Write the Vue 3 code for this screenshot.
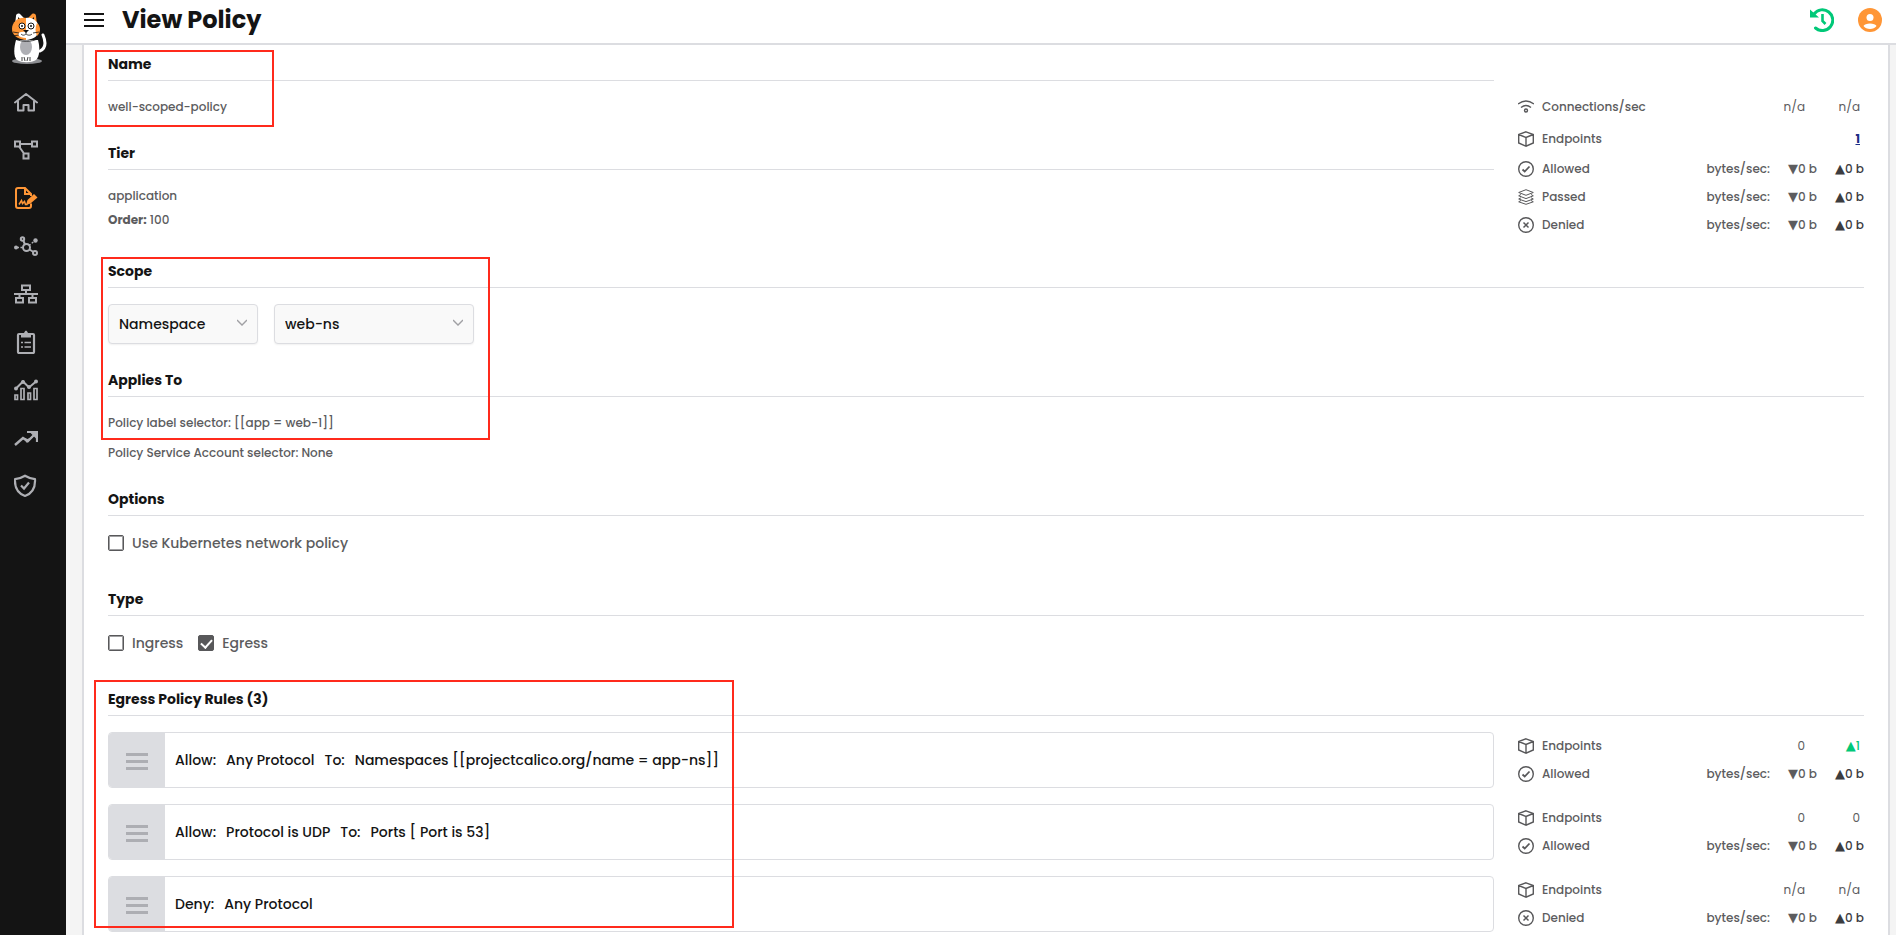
<template>
  <div class="layout">
    <aside class="sidebar">
      <a href="#" class="logo" aria-label="Home page">
        <svg width="36" height="54" viewBox="0 0 36 54">
          <ellipse cx="15" cy="48" rx="15" ry="3" fill="#8d8e92" />
          <path d="M28 38c6-3 6-9 3-16" fill="none" stroke="#fff" stroke-width="3" stroke-linecap="round" />
          <path d="M4 27h22c2 7 2 16-2 20-5 3-14 3-19 0-4-4-3-13-1-20z" fill="#fff" />
          <ellipse cx="14" cy="34" rx="6" ry="8" fill="#aeafb4" />
          <path d="M10 44v4M18 44v4M12 44l1 4M16 44l-1 4" stroke="#141414" stroke-width=".8" />
          <path d="M3 12 4 3c0-2 2-3 4-2l6 6z" fill="#fff" />
          <path d="M25 12 24 3c0-2-2-3-4-2l-6 6z" fill="#ff9636" />
          <path d="M6 9V4l4 4zM22 9V4l-4 4z" fill="#141414" />
          <path d="M14 5C6 4 0 9 0 16c0 6 5 10 14 11z" fill="#ff9636" />
          <path d="M14 5c7-1 13 4 13 11 0 6-4 10-13 11z" fill="#fff" />
          <path d="M25 10c4 3 4 9 0 13-2-4-2-9 0-13z" fill="#ff9636" />
          <circle cx="10" cy="13" r="3" fill="#fff" stroke="#141414" />
          <circle cx="19" cy="13" r="3" fill="#fff" stroke="#141414" />
          <circle cx="10" cy="13" r="1" fill="#141414" />
          <circle cx="19" cy="13" r="1" fill="#141414" />
          <path d="M6 22c0-3 4-4 8-3 4-1 8 0 8 3-3 4-13 4-16 0z" fill="#fff" />
          <path d="M11 17h6l-3 3z" fill="#141414" />
          <path d="M14 19v2M9 21c2 2 4 1 5 0 1 1 4 2 6 0M1 19l6 1M1 23l6-1M21 20l6-1M3 26c6 3 17 3 22 0" fill="none" stroke="#141414" stroke-width=".8" />
        </svg>
      </a>
      <nav class="nav">
        <a
          v-for="item in navItems"
          :key="item.label"
          href="#"
          class="nav-item"
          :class="{ active: item.active }"
          :aria-label="item.label"
        >
          <svg width="24" height="24" viewBox="0 0 24 24" fill="none" stroke="currentColor" stroke-width="2" v-html="item.icon"></svg>
        </a>
      </nav>
    </aside>

    <div class="main">
      <header class="topbar">
        <button class="icon-button menu" aria-label="Toggle menu">
          <svg width="20" height="14" viewBox="0 0 20 14" stroke="#141414" stroke-width="2">
            <path d="M0 1h20M0 7h20M0 13h20" />
          </svg>
        </button>
        <h1>View Policy</h1>
        <button class="icon-button" aria-label="History">
          <svg width="24" height="24" viewBox="0 0 24 24" fill="none" stroke="#00c878" stroke-width="3">
            <path d="M4 6A10.400 10.400 0 1 1 5.500 20" stroke-linecap="round" />
            <path d="M0 1.500v8h9z" fill="#00c878" stroke="none" />
            <path d="M12.500 6v7l3 3" stroke-width="2.600" />
          </svg>
        </button>
        <button class="icon-button" aria-label="Account">
          <svg width="24" height="24" viewBox="0 0 24 24">
            <circle cx="12" cy="12" r="12" fill="#ff9636" />
            <circle cx="12" cy="9.500" r="3.500" fill="#fff" />
            <path d="M5.500 18c1-3.500 12-3.500 13 0-2.500 4-10.500 4-13 0z" fill="#fff" />
          </svg>
        </button>
      </header>

      <main class="card">
        <div class="split">
          <div>
            <section class="section marked">
              <h2>Name</h2>
              <p>well-scoped-policy</p>
              <div class="marker marker-name"></div>
            </section>
            <section class="section tier">
              <h2>Tier</h2>
              <p>application</p>
              <p><b>Order:</b> 100</p>
            </section>
          </div>
          <table class="stats summary">
            <tbody>
              <tr v-for="row in summary" :key="row.label" :class="{ tall: !row.bytes }">
                <th scope="row">
                  <span class="stat-label">
                    <svg width="16" height="16" viewBox="0 0 16 16" v-html="statIcons[row.icon]"></svg>
                    {{ row.label }}
                  </span>
                </th>
                <template v-if="row.bytes">
                  <td>bytes/sec:</td>
                  <td><i>▼</i>0 b</td>
                  <td class="up"><i>▲</i>0 b</td>
                </template>
                <template v-else>
                  <td></td>
                  <td class="down-count">{{ row.down }}</td>
                  <td class="up-count">
                    <a v-if="row.link" href="#">{{ row.up }}</a>
                    <template v-else>{{ row.up }}</template>
                  </td>
                </template>
              </tr>
            </tbody>
          </table>
        </div>

        <div class="marked">
          <section class="section">
            <h2>Scope</h2>
            <div class="selects">
              <div class="select kind">
                <select v-model="scopeKind" aria-label="Scope">
                  <option>Namespace</option>
                  <option>Global</option>
                </select>
                <svg width="10" height="7" viewBox="0 0 10 7"><path d="M0 1 5 6l5-5" /></svg>
              </div>
              <div class="select value">
                <select v-model="namespace" aria-label="Namespace">
                  <option>web-ns</option>
                  <option>app-ns</option>
                </select>
                <svg width="10" height="7" viewBox="0 0 10 7"><path d="M0 1 5 6l5-5" /></svg>
              </div>
            </div>
          </section>
          <section class="section applies">
            <h2>Applies To</h2>
            <p>Policy label selector: [[app = web-1]]</p>
            <p>Policy Service Account selector: None</p>
          </section>
          <div class="marker marker-scope"></div>
        </div>

        <section class="section">
          <h2>Options</h2>
          <div class="checks">
            <label><input v-model="useK8s" type="checkbox" />Use Kubernetes network policy</label>
          </div>
        </section>

        <section class="section">
          <h2>Type</h2>
          <div class="checks">
            <label><input v-model="ingress" type="checkbox" />Ingress</label>
            <label><input v-model="egress" type="checkbox" />Egress</label>
          </div>
        </section>

        <section class="section marked">
          <h2>Egress Policy Rules ({{ rules.length }})</h2>
          <div class="rules">
            <div v-for="(rule, index) in rules" :key="index" class="split">
              <div class="rule">
                <button class="handle" aria-label="Reorder rule">
                  <svg width="22" height="17" viewBox="0 0 22 17" fill="#adaeb3">
                    <path d="M0 0h22v3H0zM0 7h22v3H0zM0 14h22v3H0z" />
                  </svg>
                </button>
                <div class="rule-text">
                  <span v-for="part in rule.parts" :key="part">{{ part }}</span>
                </div>
              </div>
              <table class="stats">
                <tbody>
                  <tr>
                    <th scope="row">
                      <span class="stat-label">
                        <svg width="16" height="16" viewBox="0 0 16 16" v-html="statIcons.box"></svg>
                        Endpoints
                      </span>
                    </th>
                    <td></td>
                    <td class="down-count">{{ rule.down }}</td>
                    <td class="up-count" :class="{ green: rule.active }"><i v-if="rule.active">▲</i>{{ rule.up }}</td>
                  </tr>
                  <tr>
                    <th scope="row">
                      <span class="stat-label">
                        <svg width="16" height="16" viewBox="0 0 16 16" v-html="statIcons[rule.icon]"></svg>
                        {{ rule.action }}
                      </span>
                    </th>
                    <td>bytes/sec:</td>
                    <td><i>▼</i>0 b</td>
                    <td class="up"><i>▲</i>0 b</td>
                  </tr>
                </tbody>
              </table>
            </div>
          </div>
          <div class="marker marker-rules"></div>
        </section>
      </main>
    </div>
  </div>
</template>

<script setup>
import { ref } from 'vue';

const scopeKind = ref('Namespace');
const namespace = ref('web-ns');
const useK8s = ref(false);
const ingress = ref(false);
const egress = ref(true);

// sidebar icons, 24x24
const navItems = [
  {
    label: 'Dashboard',
    icon: '<path d="M1 12.500 12 4l11 8.500M4 11v9.500h5.500V15h5v5.500H20V11" stroke-linejoin="round" stroke-linecap="round"/>'
  },
  {
    label: 'Service graph',
    icon: '<path d="M1 3.500h5v5H1zM18 3.500h5v5h-5zM9.500 15.500h5v5h-5zM6 6h12M5 8.500l5 7"/>'
  },
  {
    label: 'Policies',
    active: true,
    icon: '<path d="M17 17.500V20q0 2-2 2H4q-2 0-2-2V4q0-2 2-2h7l6 6v2M11 2v6h6"/><path d="m5 18.500 2.500-4 1 3 2-2 1 3h2" stroke-width="1.500"/><path d="m12 19 1.500-5L20 8l3.500 3.500-7 6z" fill="currentColor" stroke="none"/>'
  },
  {
    label: 'Endpoints',
    icon: '<circle cx="12.500" cy="13.500" r="3.500"/><circle cx="8.500" cy="5" r="1.700"/><circle cx="21" cy="19" r="2"/><path d="m9.500 7 1.500 3.500M15.500 15.500l4 2.500"/><path d="M3 13.500h6M15 11.500l5-4" stroke-width="1.400" stroke-dasharray="2 1.500"/><circle cx="2" cy="13.500" r="2" fill="currentColor" stroke="none"/><circle cx="21.500" cy="6.500" r="2.200" fill="currentColor" stroke="none"/>'
  },
  {
    label: 'Networks',
    icon: '<path d="M8 3.500h8v4.500H8zM2 16h7v4.500H2zM15 16h7v4.500h-7zM12 8v4M0 12h24M5.500 12v4M18.500 12v4"/>'
  },
  {
    label: 'Compliance',
    icon: '<rect x="4" y="4" width="16" height="19" rx="1" stroke-width="2.200"/><path d="M7 3h3q2-5 4 0h3v4.500H7z" fill="currentColor" stroke="none"/><path d="M7 12.500h2M10.500 12.500H17M7 17h2M10.500 17H17" stroke-width="1.700"/>'
  },
  {
    label: 'Activity',
    icon: '<path d="m2 10.500 7-7 6 6 7-6"/><g fill="currentColor" stroke="none"><circle cx="2" cy="10.500" r="2"/><circle cx="9" cy="4" r="2"/><circle cx="15" cy="9" r="2"/><circle cx="22" cy="3.500" r="2"/></g><path d="M1 17h2.500v4.500H1zM7 10.500h3v11H7zM14 15h2.500v6.500H14zM20 10.500h3v11h-3z" stroke-width="1.700"/>'
  },
  {
    label: 'Logs',
    icon: '<path d="m1 19 8-7 5 3 7-7" stroke-width="2.400"/><path d="m8 11.500 5 5.500L20 10l-6.500 3z" fill="currentColor" stroke="none"/><path d="M13 6h10v10" stroke-width="2.200"/><path d="m17 6 6 0v6z" fill="currentColor"/>'
  },
  {
    label: 'Threat defense',
    icon: '<path d="M11 1.700q5 3 10 3.500C21.500 13.500 19 19 11 22 3 19 .500 13.500 1 5.200 6 4.700 11 1.700 11 1.700z" stroke-linejoin="round" stroke-width="2.200"/><path d="m7 11.500 3 3 5-6" stroke-width="2.200"/>'
  }
];

// stats icons, 16x16
const statIcons = {
  wifi: '<path d="M0 5q8-6 16 0M3 8.500q5-4 10 0"/><circle cx="8" cy="11.500" r="1.500"/>',
  box: '<path d="m8 .800 7.300 2.700v8.500L8 15.200.700 12V3.500zM.700 3.500 8 6.500l7.300-3M8 6.500V15"/>',
  check: '<circle cx="8" cy="8" r="7.300"/><path d="m4.500 8.500 2.200 2 4.800-5" stroke-width="1.800"/>',
  layers: '<path d="m8 .7 7.300 2.800L8 6.300.700 3.500zM3 5.500.700 6.800 8 9.600l7.300-2.800L13 5.500M3 8.800.700 10 8 12.600l7.300-2.600L13 8.800M3 11.500.700 12.800 8 15.300l7.300-2.500-2.300-1.300" stroke-width="1"/>',
  cross: '<circle cx="8" cy="8" r="7.300"/><path d="m5.500 5.500 5 5M10.500 5.500l-5 5" stroke-width="1.500"/>'
};

const summary = [
  { label: 'Connections/sec', icon: 'wifi', down: 'n/a', up: 'n/a' },
  { label: 'Endpoints', icon: 'box', down: '', up: '1', link: true },
  { label: 'Allowed', icon: 'check', bytes: true },
  { label: 'Passed', icon: 'layers', bytes: true },
  { label: 'Denied', icon: 'cross', bytes: true }
];

const rules = ref([
  {
    parts: ['Allow:', 'Any Protocol', 'To:', 'Namespaces [[projectcalico.org/name = app-ns]]'],
    down: '0',
    up: '1',
    active: true,
    action: 'Allowed',
    icon: 'check'
  },
  {
    parts: ['Allow:', 'Protocol is UDP', 'To:', 'Ports [ Port is 53]'],
    down: '0',
    up: '0',
    action: 'Allowed',
    icon: 'check'
  },
  {
    parts: ['Deny:', 'Any Protocol'],
    down: 'n/a',
    up: 'n/a',
    action: 'Denied',
    icon: 'cross'
  }
]);
</script>

<style>
body {
  margin: 0;
  background: #f4f4f4;
}
</style>

<style scoped>
.layout {
  display: flex;
  min-height: 100vh;
  font-family: Poppins, Inter, "Liberation Sans", sans-serif;
  font-size: 12px;
  font-weight: 500;
  line-height: 20px;
  color: #5c5c5e;
}

.layout * {
  box-sizing: border-box;
}

.sidebar {
  flex: none;
  width: 66px;
  background: #141414;
}

.logo {
  display: block;
  height: 78px;
  padding: 13px 0 0 12px;
}

.nav-item {
  display: flex;
  align-items: center;
  height: 48px;
  padding-left: 14px;
  color: #aeafb4;
}

.nav-item.active {
  color: #ff9636;
}

.main {
  flex: 1;
  min-width: 0;
  display: flex;
  flex-direction: column;
}

.topbar {
  display: flex;
  align-items: center;
  gap: 24px;
  height: 45px;
  padding: 0 14px 4px 18px;
  background: #fff;
  border-bottom: 2px solid #dcdde1;
}

.icon-button {
  display: flex;
  padding: 0;
  border: 0;
  background: none;
  cursor: pointer;
}

.menu {
  margin-right: -6px;
}

h1 {
  flex: 1;
  margin: 0;
  font-size: 24px;
  font-weight: 700;
  line-height: 36px;
  color: #141414;
}

.card {
  flex: 1;
  margin: 0 6px 0 16px;
  padding: 9px 24px 0;
  background: #fff;
  border: solid #dcdde1;
  border-width: 0 2px;
}

.split {
  display: grid;
  grid-template-columns: 1fr 346px;
  gap: 24px;
}

.marked {
  position: relative;
}

.marker {
  position: absolute;
  border: 2px solid #ff2a1c;
  pointer-events: none;
}

.marker-name {
  top: -4px;
  left: -13px;
  width: 179px;
  height: 77px;
}

.marker-scope {
  top: -4px;
  left: -7px;
  width: 389px;
  height: 183px;
}

.marker-rules {
  top: -9px;
  left: -14px;
  width: 640px;
  height: 248px;
}

.section {
  margin-bottom: 26px;
}

.section.tier {
  margin-bottom: 31px;
}

h2 {
  margin: 0 0 16px;
  padding-bottom: 6px;
  border-bottom: 1px solid #dcdde1;
  font-size: 14px;
  font-weight: 700;
  line-height: 20px;
  color: #141414;
}

p {
  margin: 0;
}

p + p {
  margin-top: 4px;
}

.applies p + p {
  margin-top: 10px;
}

.stats {
  width: 100%;
  table-layout: fixed;
  border-collapse: collapse;
  align-self: start;
}

.summary {
  margin-top: 37px;
}

.stats tr {
  height: 28px;
}

.stats tr.tall {
  height: 32px;
}

.stats th,
.stats td {
  padding: 0;
  text-align: right;
  font-weight: 500;
  white-space: nowrap;
}

.stats th {
  width: 152px;
}

.stats td:nth-child(3),
.stats td:nth-child(4) {
  width: 47px;
}

.stats .down-count {
  padding-right: 12px;
}

.stats .up-count {
  padding-right: 4px;
}

.stats .down-count,
.stats .up-count {
  font-weight: 400;
}

.stats .up {
  color: #3c3c3f;
}

.stats .green {
  color: #00c878;
  font-weight: 500;
}

.stats i {
  font-family: "DejaVu Sans", sans-serif;
  font-size: 13px;
  font-style: normal;
  line-height: 1;
}

.stats a {
  color: #1d2f86;
  font-weight: 700;
}

.stat-label {
  display: flex;
  align-items: center;
  gap: 8px;
}

.stat-label svg {
  fill: none;
  stroke: #58585a;
  stroke-width: 1.4;
}

.selects {
  display: flex;
  gap: 16px;
}

.select {
  position: relative;
}

.kind {
  width: 150px;
}

.value {
  width: 200px;
}

.select select {
  display: block;
  width: 100%;
  height: 40px;
  padding: 0 32px 0 10px;
  appearance: none;
  border: 1px solid #dcdde1;
  border-radius: 4px;
  background: #f9f9f9;
  box-shadow: 0 1px 2px rgba(0, 0, 0, 0.06);
  font: inherit;
  font-size: 14px;
  color: #141414;
}

.select svg {
  position: absolute;
  top: 15px;
  right: 11px;
  fill: none;
  stroke: #a0a0a4;
  stroke-width: 1.4;
  pointer-events: none;
}

.checks {
  display: flex;
  gap: 15px;
  height: 31px;
  font-size: 14px;
}

.checks label {
  display: flex;
  align-items: center;
  gap: 8px;
  height: 22px;
}

.checks input {
  position: relative;
  width: 16px;
  height: 16px;
  margin: 0;
  appearance: none;
  border: 1px solid #58585a;
  border-radius: 2px;
  box-shadow: inset 0 0 0 1px #a0a0a2;
}

.checks input:checked {
  background: #58585a;
  box-shadow: none;
}

.checks input:checked::after {
  content: "";
  position: absolute;
  top: 1px;
  left: 4px;
  width: 5px;
  height: 9px;
  border: solid #fff;
  border-width: 0 2px 2px 0;
  transform: rotate(42deg);
}

.rules {
  display: flex;
  flex-direction: column;
  gap: 16px;
}

.rule {
  display: flex;
  height: 56px;
  border: 1px solid #dcdde1;
  border-radius: 4px;
  overflow: hidden;
}

.handle {
  display: flex;
  align-items: center;
  justify-content: center;
  width: 56px;
  padding: 2px 0 0;
  border: 0;
  background: #dcdde1;
  cursor: grab;
}

.rule-text {
  display: flex;
  align-items: center;
  gap: 10px;
  padding-left: 10px;
  font-size: 14px;
  color: #141414;
}
</style>
